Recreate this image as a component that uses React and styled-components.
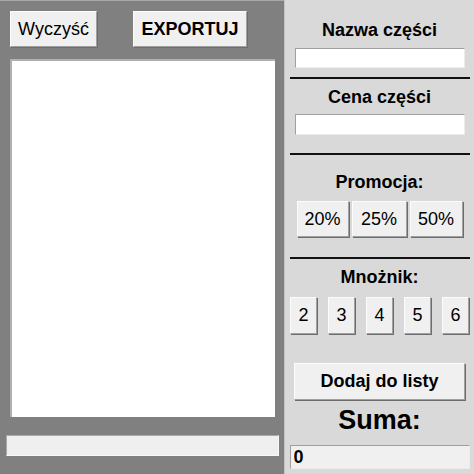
import React from 'react';
import styled, { createGlobalStyle } from 'styled-components';

const GlobalStyle = createGlobalStyle`
  html, body {
    margin: 0;
    padding: 0;
    background: #808080;
  }
  body {
    font-family: "Liberation Sans", Arial, sans-serif;
  }
`;

const Window = styled.div`
  display: grid;
  grid-template-columns: 284px 190px;
  width: 474px;
  height: 474px;
  overflow: hidden;
`;

const LeftPane = styled.div`
  display: flex;
  flex-direction: column;
  background: #808080;
  border-top: 1px solid #a8a8a8;
  padding: 10px 0 0 0;
`;

const Toolbar = styled.div`
  display: flex;
  padding-left: 10px;
  gap: 36px;
`;

const Button = styled.button`
  box-sizing: border-box;
  width: ${({ $w }) => $w}px;
  height: ${({ $h }) => $h || 36}px;
  padding: 0;
  margin: 0;
  background: #f0f0f0;
  border: 1px solid;
  border-color: #fcfcfc #a0a0a0 #a0a0a0 #fcfcfc;
  box-shadow: 1px 1px 0 #6d6d6d;
  font-family: "Liberation Sans", Arial, sans-serif;
  font-size: 18px;
  font-weight: ${({ $bold }) => ($bold ? 700 : 400)};
  color: #000;
  cursor: pointer;
`;

const ListBox = styled.div`
  box-sizing: border-box;
  margin: 12px 0 0 10px;
  width: 265px;
  height: 358px;
  background: #fff;
  border-top: 2px solid #b0b0b0;
  border-left: 2px solid #b0b0b0;
`;

const StatusField = styled.input`
  box-sizing: border-box;
  margin: 18px 0 0 6px;
  width: 273px;
  height: 21px;
  background: #efefef;
  border: 1px solid;
  border-color: #a8a8a8 #f8f8f8 #f8f8f8 #a8a8a8;
  outline: none;
`;

const RightPane = styled.div`
  display: flex;
  flex-direction: column;
  align-items: center;
  background: #d9d9d9;
  border-left: 1px solid #c4c4c4;
`;

const Label = styled.div`
  font-size: ${({ $big }) => ($big ? 27 : 18)}px;
  line-height: ${({ $big }) => ($big ? 30 : 22)}px;
  font-weight: 700;
  color: #000;
  margin-top: ${({ $mt }) => $mt}px;
`;

const TextField = styled.input`
  box-sizing: border-box;
  width: ${({ $w }) => $w || 170}px;
  height: ${({ $h }) => $h || 20}px;
  margin-top: ${({ $mt }) => $mt}px;
  padding: 0 3px;
  background: ${({ $bg }) => $bg || '#fff'};
  border: 1px solid;
  border-color: #a0a0a0 #ececec #ececec #a0a0a0;
  font-family: "Liberation Sans", Arial, sans-serif;
  font-size: 18px;
  font-weight: 700;
  color: #000;
  outline: none;
`;

const Separator = styled.hr`
  width: 180px;
  height: 2px;
  margin: ${({ $mt }) => $mt}px 0 0 0;
  padding: 0;
  border: none;
  background: #111;
`;

const ButtonRow = styled.div`
  display: flex;
  justify-content: center;
  gap: ${({ $gap }) => $gap}px;
  margin-top: ${({ $mt }) => $mt}px;
`;

const promotions = [
  { label: '20%', w: 52 },
  { label: '25%', w: 55 },
  { label: '50%', w: 53 },
];

const multipliers = [2, 3, 4, 5, 6];

export default function App() {
  return (
    <>
      <GlobalStyle />
      <Window>
        <LeftPane>
          <Toolbar>
            <Button $w={87}>Wyczyść</Button>
            <Button $w={114} $bold>EXPORTUJ</Button>
          </Toolbar>
          <ListBox />
          <StatusField readOnly />
        </LeftPane>
        <RightPane>
          <Label $mt={19}>Nazwa części</Label>
          <TextField $mt={7} />
          <Separator $mt={9} />
          <Label $mt={7}>Cena części</Label>
          <TextField $mt={6} $h={21} />
          <Separator $mt={18} />
          <Label $mt={16}>Promocja:</Label>
          <ButtonRow $mt={8} $gap={3}>
            {promotions.map((p) => (
              <Button key={p.label} $w={p.w}>{p.label}</Button>
            ))}
          </ButtonRow>
          <Separator $mt={20} />
          <Label $mt={7}>Mnożnik:</Label>
          <ButtonRow $mt={9} $gap={11}>
            {multipliers.map((n) => (
              <Button key={n} $w={27} $h={37}>{n}</Button>
            ))}
          </ButtonRow>
          <Button $w={171} $h={37} $bold style={{ marginTop: 29 }}>Dodaj do listy</Button>
          <Label $big $mt={5}>Suma:</Label>
          <TextField $mt={10} $w={180} $h={24} $bg="#f0f0f0" value="0" readOnly />
        </RightPane>
      </Window>
    </>
  );
}
